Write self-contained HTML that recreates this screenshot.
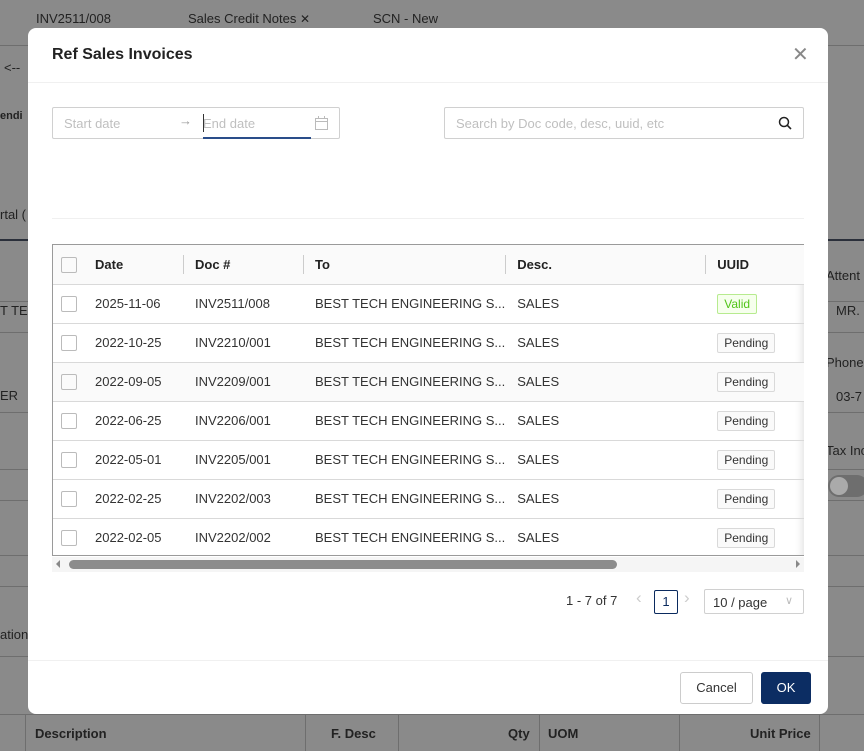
<!DOCTYPE html>
<html><head><meta charset="utf-8"><style>
*{box-sizing:border-box;margin:0;padding:0}
body{width:864px;height:751px;overflow:hidden;background:#8a8a8a;font-family:"Liberation Sans",sans-serif;color:#222;position:relative;font-size:13px}
.a{position:absolute;white-space:nowrap}
.bl{position:absolute;height:1px;background:#6e6e6e}
.modal{position:absolute;left:28px;top:28px;width:800px;height:686px;background:#fff;border-radius:8px}
.in{position:absolute;border:1px solid #d0d0d0;border-radius:2px;color:#bfbfbf;font-size:13px}
table{border-collapse:collapse;font-size:13px}
td{height:39px;border-bottom:1px solid #d9d9d9;padding:0 0 0 12px;white-space:nowrap;color:#333}
th{height:39px;border-bottom:1px solid #d9d9d9;text-align:left;padding:0 0 0 12px;font-weight:bold;background:#fafafa;position:relative}
.cb{display:inline-block;width:16px;height:16px;border:1px solid #bbb;border-radius:2px;vertical-align:middle}
.tag{display:inline-block;border:1px solid #d9d9d9;background:#fafafa;padding:2px 6px;font-size:12px;border-radius:2px}
.sep{position:absolute;left:0;top:10px;height:19px;width:1px;background:#ccc}
</style></head><body>
<div class="a" style="left:36px;top:11px;font-size:13px;color:#222">INV2511/008</div>
<div class="a" style="left:188px;top:11px;font-size:13px;color:#222">Sales Credit Notes <span style="font-size:12px">✕</span></div>
<div class="a" style="left:373px;top:11px;font-size:13px;color:#222">SCN - New</div>
<div class="bl" style="left:0;top:45px;width:864px"></div>
<div class="a" style="left:4px;top:60px">&lt;--</div>
<div class="a" style="left:0;top:110px;font-weight:bold;font-size:11px">endi</div>
<div class="a" style="left:0;top:207px">rtal (</div>
<div class="a" style="left:0;top:239px;width:864px;height:2px;background:#2a2f3a"></div>
<div class="a" style="left:0;top:303px">T TEC</div>
<div class="a" style="left:0;top:388px">ER</div>
<div class="a" style="left:0;top:627px">ation</div>
<div class="a" style="left:826px;top:268px">Attent</div>
<div class="a" style="left:836px;top:303px">MR.</div>
<div class="a" style="left:826px;top:355px">Phone</div>
<div class="a" style="left:836px;top:389px">03-7</div>
<div class="a" style="left:826px;top:443px">Tax Inc</div>
<div class="a" style="left:828px;top:475px;width:40px;height:22px;border-radius:11px;background:#6e6e6e"><div style="width:18px;height:18px;margin:2px;border-radius:50%;background:#aaa"></div></div>
<div class="bl" style="left:0;top:301px;width:864px"></div><div class="bl" style="left:0;top:332px;width:864px"></div>
<div class="bl" style="left:0;top:412px;width:864px"></div><div class="bl" style="left:0;top:469px;width:864px"></div>
<div class="bl" style="left:0;top:500px;width:864px"></div><div class="bl" style="left:0;top:555px;width:864px"></div>
<div class="bl" style="left:0;top:586px;width:864px"></div><div class="bl" style="left:0;top:656px;width:864px"></div>
<div class="bl" style="left:0;top:714px;width:864px"></div>
<div class="a" style="left:0;top:715px;width:864px;height:36px;font-weight:bold;font-size:13px">
<div class="a" style="left:35px;top:11px">Description</div><div class="a" style="left:331px;top:11px">F. Desc</div>
<div class="a" style="left:508px;top:11px">Qty</div><div class="a" style="left:548px;top:11px">UOM</div>
<div class="a" style="left:750px;top:11px">Unit Price</div>
<div class="a" style="left:25px;top:0;width:1px;height:36px;background:#6e6e6e"></div><div class="a" style="left:305px;top:0;width:1px;height:36px;background:#6e6e6e"></div><div class="a" style="left:398px;top:0;width:1px;height:36px;background:#6e6e6e"></div><div class="a" style="left:539px;top:0;width:1px;height:36px;background:#6e6e6e"></div><div class="a" style="left:679px;top:0;width:1px;height:36px;background:#6e6e6e"></div><div class="a" style="left:819px;top:0;width:1px;height:36px;background:#6e6e6e"></div>
</div>

<div class="modal">
<div class="a" style="left:24px;top:18px;font-size:16px;font-weight:bold;color:#222">Ref Sales Invoices</div>
<div class="a" style="left:764px;top:14px;font-size:20px;color:#888">✕</div>
<div class="a" style="left:0;top:54px;width:800px;height:1px;background:#f0f0f0"></div>
<div class="in" style="left:24px;top:79px;width:288px;height:32px">
<span class="a" style="left:11px;top:8px">Start date</span>
<span class="a" style="left:126px;top:5px;color:#999">→</span>
<span class="a" style="left:150px;top:8px">End date</span>
<span class="a" style="left:150px;top:6px;width:1px;height:18px;background:#333"></span>
<span class="a" style="left:150px;top:29px;width:108px;height:2px;background:#2a4d8a"></span>
<svg class="a" style="left:262px;top:8px" width="13" height="14" viewBox="0 0 13 14"><rect x="0.5" y="2.5" width="12" height="11" fill="none" stroke="#bbb"/><line x1="0.5" y1="5.5" x2="12.5" y2="5.5" stroke="#bbb"/><line x1="3.5" y1="0" x2="3.5" y2="3" stroke="#bbb"/><line x1="9.5" y1="0" x2="9.5" y2="3" stroke="#bbb"/></svg>
</div>
<div class="in" style="left:416px;top:79px;width:360px;height:32px">
<span class="a" style="left:11px;top:8px">Search by Doc code, desc, uuid, etc</span>
<svg class="a" style="left:333px;top:8px" width="14" height="14" viewBox="0 0 14 14"><circle cx="6" cy="6" r="4.5" fill="none" stroke="#222" stroke-width="1.5"/><line x1="9.3" y1="9.3" x2="13" y2="13" stroke="#222" stroke-width="1.6"/></svg>
</div>
<div class="a" style="left:24px;top:190px;width:752px;height:1px;background:#f0f0f0"></div>
<div class="a" style="left:24px;top:216px;width:752px;height:312px;border:1px solid #9a9a9a;border-right:none;overflow:hidden;box-shadow:inset -8px 0 8px -6px rgba(0,0,0,.12)">
<table style="width:800px">
<tr><th style="width:30px;padding-left:8px"><span class="cb"></span></th><th style="width:100px">Date</th><th style="width:120px"><i class="sep"></i>Doc #</th><th style="width:200px"><i class="sep"></i>To</th><th style="width:200px"><i class="sep"></i>Desc.</th><th><i class="sep"></i>UUID</th></tr>
<tr><td style="padding-left:8px"><span class="cb"></span></td><td>2025-11-06</td><td>INV2511/008</td><td>BEST TECH ENGINEERING S...</td><td>SALES</td><td><span class="tag" style="border-color:#b7eb8f;background:#f6ffed;color:#52c41a">Valid</span></td></tr>
<tr><td style="padding-left:8px"><span class="cb"></span></td><td>2022-10-25</td><td>INV2210/001</td><td>BEST TECH ENGINEERING S...</td><td>SALES</td><td><span class="tag">Pending</span></td></tr>
<tr style="background:#fafafa"><td style="padding-left:8px"><span class="cb"></span></td><td>2022-09-05</td><td>INV2209/001</td><td>BEST TECH ENGINEERING S...</td><td>SALES</td><td><span class="tag">Pending</span></td></tr>
<tr><td style="padding-left:8px"><span class="cb"></span></td><td>2022-06-25</td><td>INV2206/001</td><td>BEST TECH ENGINEERING S...</td><td>SALES</td><td><span class="tag">Pending</span></td></tr>
<tr><td style="padding-left:8px"><span class="cb"></span></td><td>2022-05-01</td><td>INV2205/001</td><td>BEST TECH ENGINEERING S...</td><td>SALES</td><td><span class="tag">Pending</span></td></tr>
<tr><td style="padding-left:8px"><span class="cb"></span></td><td>2022-02-25</td><td>INV2202/003</td><td>BEST TECH ENGINEERING S...</td><td>SALES</td><td><span class="tag">Pending</span></td></tr>
<tr><td style="padding-left:8px"><span class="cb"></span></td><td>2022-02-05</td><td>INV2202/002</td><td>BEST TECH ENGINEERING S...</td><td>SALES</td><td><span class="tag">Pending</span></td></tr>
</table></div>
<div class="a" style="left:24px;top:529px;width:752px;height:15px;background:#f5f5f5">
<span class="a" style="left:4px;top:3px;width:0;height:0;border:4px solid transparent;border-right-color:#888;border-left:none"></span>
<span class="a" style="left:17px;top:3px;width:548px;height:9px;border-radius:5px;background:#8c8c8c"></span>
<span class="a" style="right:4px;top:3px;width:0;height:0;border:4px solid transparent;border-left-color:#888;border-right:none"></span>
</div>
<div class="a" style="left:538px;top:565px;font-size:13px;color:#333">1 - 7 of 7</div>
<div class="a" style="left:608px;top:560px;color:#ccc;font-size:17px">‹</div>
<div class="a" style="left:626px;top:562px;width:24px;height:24px;border:1px solid #0a2a5e;border-radius:2px;text-align:center;line-height:22px;color:#0a2a5e">1</div>
<div class="a" style="left:656px;top:560px;color:#ccc;font-size:17px">›</div>
<div class="a" style="left:676px;top:561px;width:100px;height:25px;border:1px solid #d0d0d0;border-radius:2px;padding:5px 8px;color:#333">10 / page<span style="position:absolute;right:10px;top:4px;color:#bbb;font-size:11px">∨</span></div>
<div class="a" style="left:0;top:632px;width:800px;height:1px;background:#f0f0f0"></div>
<div class="a" style="left:652px;top:644px;width:73px;height:32px;border:1px solid #ccc;border-radius:3px;text-align:center;line-height:30px;color:#333">Cancel</div>
<div class="a" style="left:733px;top:644px;width:50px;height:32px;background:#0c2d63;border-radius:3px;text-align:center;line-height:32px;color:#fff">OK</div>
</div>
</body></html>
